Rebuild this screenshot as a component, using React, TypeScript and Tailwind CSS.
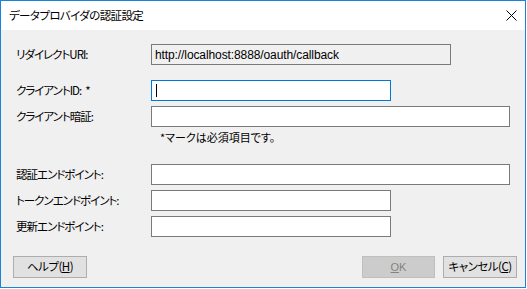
const jp = "font-['Noto_Sans_CJK_JP','Noto_Sans',sans-serif] [font-feature-settings:'palt']"

const Field = ({ width, focused, readOnly, value }: { width: string; focused?: boolean; readOnly?: boolean; value?: string }) => (
	<div
		className={`flex h-[21px] items-center border px-[3px] text-[11px] text-black ${width} ${
			focused ? "border-[#0078d7] bg-white" : readOnly ? "border-[#7a7a7a] bg-[#f0f0f0]" : "border-[#7a7a7a] bg-white"
		}`}
	>
		{value && (
			<span className="font-['Liberation_Sans',sans-serif] text-[12px] tracking-[-0.1px] [font-feature-settings:normal]">
				{value}
			</span>
		)}
		{focused && <span className="ml-[1px] h-[13px] w-px bg-black" />}
	</div>
)

const Row = ({ label, children, className = "" }: { label: React.ReactNode; children: React.ReactNode; className?: string }) => (
	<div className={`flex items-center ${className}`}>
		<div className="w-[135px] text-[11.5px] leading-[21px] tracking-[-1px] text-black">{label}</div>
		{children}
	</div>
)

export default function App() {
	return (
		<div className={`flex h-[288px] w-[526px] flex-col border border-[#1883d7] bg-white ${jp}`}>
			<div className="flex h-[29px] items-center justify-between bg-white pl-[8px] pr-[8px]">
				<span className="text-[11.5px] tracking-[-0.6px] text-black">データプロバイダの認証設定</span>
				<svg width="11" height="11" viewBox="0 0 11 11">
					<path d="M0.5 0.5 L10.5 10.5 M10.5 0.5 L0.5 10.5" stroke="#000" strokeWidth="1" />
				</svg>
			</div>
			<div className="flex flex-1 flex-col bg-[#f0f0f0] px-[15px] pt-[14px]">
				<Row label="リダイレクトURI:">
					<Field width="w-[300px]" readOnly value="http://localhost:8888/oauth/callback" />
				</Row>
				<Row
					label={
						<>
							クライアントID:<span className="ml-[4px]">*</span>
						</>
					}
					className="mt-[15px]"
				>
					<Field width="w-[240px]" focused />
				</Row>
				<Row label="クライアント暗証:" className="mt-[5px]">
					<Field width="w-[360px]" />
				</Row>
				<div className="mt-[2px] h-[16px] pl-[144px] text-[11px] leading-[16px] text-black">
					*マークは必須項目です。
				</div>
				<Row label="認証エンドポイント:" className="mt-[19px]">
					<Field width="w-[360px]" />
				</Row>
				<Row label="トークンエンドポイント:" className="mt-[5px]">
					<Field width="w-[240px]" />
				</Row>
				<Row label="更新エンドポイント:" className="mt-[5px]">
					<Field width="w-[240px]" />
				</Row>
				<div className="-mx-[3px] mt-[19px] flex items-center gap-[8px]">
					<button className="flex h-[22px] w-[74px] items-center justify-center border border-[#adadad] bg-[#e1e1e1] text-[11.5px] tracking-[-0.5px] text-black">
						ヘルプ(<span className="underline">H</span>)
					</button>
					<div className="flex-1" />
					<button
						disabled
						className="flex h-[22px] w-[73px] items-center justify-center border border-[#bfbfbf] bg-[#cccccc] font-['Liberation_Sans',sans-serif] text-[11px] text-[#838383]"
					>
						<span className="underline">O</span>K
					</button>
					<button className="-mr-[4px] flex h-[22px] w-[74px] items-center justify-center border border-[#adadad] bg-[#e1e1e1] text-[11.5px] tracking-[-0.5px] text-black">
						キャンセル(<span className="underline">C</span>)
					</button>
				</div>
			</div>
		</div>
	)
}
